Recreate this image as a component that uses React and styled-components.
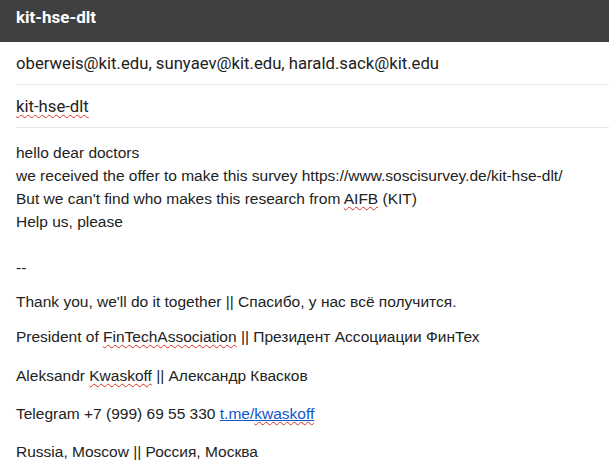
import React from 'react';
import styled, { createGlobalStyle } from 'styled-components';

const GlobalStyle = createGlobalStyle`
  body {
    margin: 0;
    background: #fff;
  }
`;

const Page = styled.div`
  width: 609px;
  height: 474px;
  overflow: hidden;
  background: #fff;
`;

const Header = styled.div`
  height: 42px;
  background: #404040;
  color: #fff;
  display: flex;
  align-items: center;
  padding: 0 16px 9px;
  box-sizing: border-box;
  font-family: Roboto, "Noto Sans", sans-serif;
  font-weight: 700;
  font-size: 17px;
`;

const Field = styled.div`
  margin-left: 16px;
  height: ${(p) => p.h}px;
  display: flex;
  align-items: center;
  border-bottom: 1px solid #e6e6e6;
  font-family: Roboto, "Noto Sans", sans-serif;
  font-size: 16.7px;
  color: #222;
`;

const Body = styled.div`
  padding: 13px 16px 0;
  font-family: "Liberation Sans", Arial, sans-serif;
  font-size: 15.5px;
  line-height: 23px;
  color: #222;
`;

const Line = styled.div`
  min-height: 23px;
  margin-bottom: ${(p) => p.gap || 0}px;
`;

const Typo = styled.span`
  text-decoration: underline wavy #d93025;
  text-decoration-thickness: 1px;
  text-underline-offset: 2px;
`;

const Link = styled.a`
  color: #1155cc;
  text-decoration: underline;
`;

export default function App() {
  return (
    <Page>
      <GlobalStyle />
      <Header>kit-hse-dlt</Header>
      <Field h={42}>oberweis@kit.edu, sunyaev@kit.edu, harald.sack@kit.edu</Field>
      <Field h={42}>
        <Typo>kit-hse-dlt</Typo>
      </Field>
      <Body>
        <Line>hello dear doctors</Line>
        <Line>we received the offer to make this survey https://www.soscisurvey.de/kit-hse-dlt/</Line>
        <Line>
          But we can't find who makes this research from <Typo>AIFB</Typo> (KIT)
        </Line>
        <Line>Help us, please</Line>
        <Line />
        <Line gap={11}>--</Line>
        <Line gap={12}>Thank you, we'll do it together || Спасибо, у нас всё получится.</Line>
        <Line gap={16}>
          President of <Typo>FinTechAssociation</Typo> || Президент Ассоциации ФинТех
        </Line>
        <Line gap={15}>
          Aleksandr <Typo>Kwaskoff</Typo> || Александр Квасков
        </Line>
        <Line gap={15}>
          Telegram +7 (999) 69 55 330{' '}
          <Link href="#">
            t.me/<Typo>kwaskoff</Typo>
          </Link>
        </Line>
        <Line>Russia, Moscow || Россия, Москва</Line>
      </Body>
    </Page>
  );
}
